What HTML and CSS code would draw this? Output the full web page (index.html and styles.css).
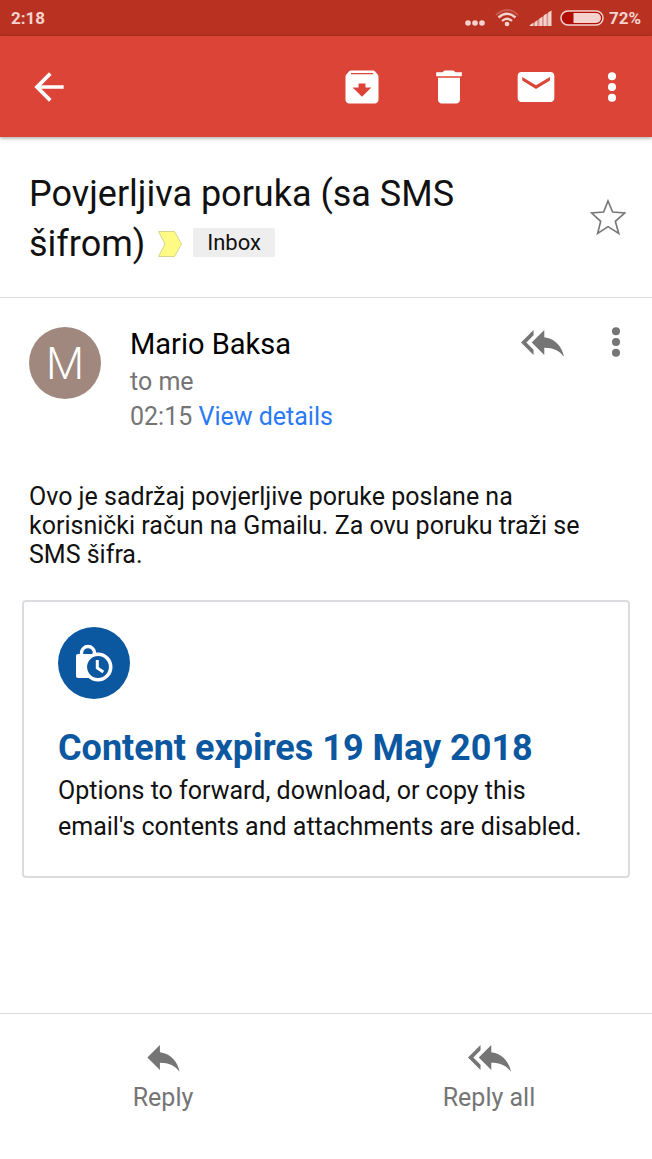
FILE: index.html
```html
<!DOCTYPE html>
<html lang="hr">
<head>
  <meta charset="UTF-8">
  <meta name="viewport" content="width=device-width, initial-scale=1">
  <title>Povjerljiva poruka</title>
  <link rel="stylesheet" href="styles.css">
</head>
<body>

  <div class="status-bar">
    <span class="clock">2:18</span>
    <div class="status-icons">
      <svg class="status-dots" width="20" height="18" viewBox="0 0 20 18"><circle cx="3" cy="14" r="2.8"/><circle cx="10" cy="14" r="2.8"/><circle cx="17" cy="14" r="2.8"/></svg>
      <svg class="status-wifi" width="24" height="18" viewBox="0 0 24 18">
        <g fill="none" stroke="#f4d3cf">
          <path d="M1 6Q12-4 23 6" stroke-width="2" opacity=".25"/>
          <path d="M3.5 8.5Q12 1 20.5 8.5" stroke-width="2.4"/>
          <path d="M7 12Q12 7.5 17 12" stroke-width="2.2"/>
        </g>
        <circle cx="12" cy="15" r="2.3"/>
      </svg>
      <svg class="status-signal" width="23" height="18" viewBox="0 0 23 18"><path opacity=".6" d="M0 17L22 2v15z"/><path d="M1 17v-1l3-2v3zM6 17v-4l2-1.5v5.500zM10.500 17v-7.500l2.500-1.500v9zM14.700 17V6.500L17.500 4.500v12.500zM19.200 17V3.500L22.500 1.500V17z"/></svg>
      <svg class="status-battery" width="44" height="18" viewBox="0 0 44 18">
        <rect x="1" y="2" width="42" height="14" rx="7" fill="#b00d05" stroke="#f4d3cf" stroke-width="1.5"/>
        <path d="M13.500 4H36a5 5 0 0 1 0 10H13.500z"/>
      </svg>
      <span>72%</span>
    </div>
  </div>

  <header class="app-bar">
    <button class="icon-button back" aria-label="Back">
      <svg class="icon" viewBox="0 0 24 24"><path d="M20 11H7.830l5.590-5.590L12 4l-8 8 8 8 1.410-1.410L7.830 13H20v-2z"/></svg>
    </button>
    <button class="icon-button" aria-label="Archive">
      <svg class="icon" viewBox="0 0 24 24"><path fill-rule="evenodd" d="M20.540 5.230l-1.390-1.680C18.880 3.210 18.470 3 18 3H6c-.47 0-.88.210-1.160.550L3.460 5.230C3.170 5.570 3 6.020 3 6.500V19c0 1.100.9 2 2 2h14c1.100 0 2-.9 2-2V6.500c0-.48-.17-.93-.46-1.270zM12 17.300L6.900 12.300H10.100v-2.200h3.800v2.200h3.200zM5.800 5l.3-.7h11.800l.3.700z"/></svg>
    </button>
    <button class="icon-button" aria-label="Delete">
      <svg class="icon" viewBox="0 0 24 24"><path d="M6 19c0 1.100.9 2 2 2h8c1.100 0 2-.9 2-2V7H6v12zM19 4h-3.500l-1-1h-5l-1 1H5v2.200h14V4z"/></svg>
    </button>
    <button class="icon-button" aria-label="Mark as unread">
      <svg class="icon" viewBox="0 0 24 24"><path fill-rule="evenodd" d="M20 3.800H4c-1.100 0-2 .9-2 2V18.200c0 1.100.9 2 2 2h16c1.100 0 2-.9 2-2V5.800c0-1.100-.9-2-2-2zM4.500 6.600l7.500 4.500 7.600-4.500V8.400L12 13.100 4.500 8.400z"/></svg>
    </button>
    <button class="icon-button more" aria-label="More options">
      <svg class="icon" viewBox="0 0 24 24"><circle cx="12" cy="6.100" r="2.200"/><circle cx="12" cy="12" r="2.200"/><circle cx="12" cy="17.900" r="2.200"/></svg>
    </button>
  </header>

  <main>
    <section class="subject">
      <div class="subject-text">
        <h1>Povjerljiva poruka (sa SMS šifrom)</h1>
        <svg class="marker" width="24" height="26" viewBox="0 0 24 26"><path d="M.5.500h16L23.500 13l-7 12.500H.5L7 13z"/></svg>
        <span class="label">Inbox</span>
      </div>
      <button class="star" aria-label="Star">
        <svg width="36" height="38" viewBox="271 55 108 114"><path d="M325 64L339 97 375 100 347 125 357 161 325 141 294 161 303 125 276 100 312 97z"/></svg>
      </button>
    </section>

    <article>
      <div class="message-header">
        <div class="avatar">M</div>
        <div class="sender">
          <div class="sender-name">Mario Baksa</div>
          <div class="sender-meta">to me</div>
          <div class="sender-meta">02:15 <a href="#details">View details</a></div>
        </div>
        <button class="icon-button" aria-label="Reply all">
          <svg class="reply-icon" viewBox="0 0 24 24"><path d="M7 8V5l-7 7 7 7v-3l-4-4 4-4zm6 1V5l-7 7 7 7v-4.100c5 0 8.500 1.600 11 5.100-1-5-4-10-11-11z"/></svg>
        </button>
        <button class="icon-button" aria-label="Message options">
          <svg class="icon" viewBox="0 0 24 24"><circle cx="12" cy="6.100" r="2.200"/><circle cx="12" cy="12" r="2.200"/><circle cx="12" cy="17.900" r="2.200"/></svg>
        </button>
      </div>

      <p class="message-text">Ovo je sadržaj povjerljive poruke poslane na korisnički račun na Gmailu. Za ovu poruku traži se SMS šifra.</p>

      <div class="expire-card">
        <svg class="expire-icon" width="72" height="72" viewBox="0 0 72 72">
          <circle cx="36" cy="36" r="36" fill="#0b57a0"/>
          <path d="M23.500 30v-4a6.500 6.500 0 0 1 13 0v4" fill="none" stroke="#fff" stroke-width="3.400"/>
          <path d="M20 27h20v24H20a2 2 0 0 1-2-2V29a2 2 0 0 1 2-2z" fill="#fff"/>
          <circle cx="40" cy="40" r="12.700" fill="#0b57a0" stroke="#fff" stroke-width="3.600"/>
          <path d="M39.300 33v8l6 4" fill="none" stroke="#fff" stroke-width="3"/>
        </svg>
        <h2>Content expires 19 May 2018</h2>
        <p>Options to forward, download, or copy this email's contents and attachments are disabled.</p>
      </div>
    </article>
  </main>

  <footer class="reply-bar">
    <button class="reply-button">
      <svg class="reply-icon" viewBox="0 0 24 24"><path d="M10 9V5l-7 7 7 7v-4.100c5 0 8.500 1.600 11 5.100-1-5-4-10-11-11z"/></svg>
      <span>Reply</span>
    </button>
    <button class="reply-button">
      <svg class="reply-icon" viewBox="0 0 24 24"><path d="M7 8V5l-7 7 7 7v-3l-4-4 4-4zm6 1V5l-7 7 7 7v-4.100c5 0 8.500 1.600 11 5.100-1-5-4-10-11-11z"/></svg>
      <span>Reply all</span>
    </button>
  </footer>

</body>
</html>
```
FILE: styles.css
```css
* {
  box-sizing: border-box;
}

body {
  margin: 0;
  min-height: 100vh;
  display: flex;
  flex-direction: column;
  font-family: Roboto, sans-serif;
  background: #fff;
  color: #111;
}

h1, h2, p {
  margin: 0;
}

button {
  padding: 0;
  border: none;
  background: none;
  font-family: inherit;
  color: inherit;
  cursor: pointer;
}

svg {
  display: block;
  fill: currentColor;
}

.status-bar {
  display: flex;
  align-items: center;
  justify-content: space-between;
  height: 36px;
  padding: 0 11px;
  background: #b93221;
  color: #f4d3cf;
  font-size: 17px;
  font-weight: 700;
}

.status-icons {
  display: flex;
  align-items: center;
}

.status-wifi,
.status-signal {
  margin-left: 10px;
}

.status-battery {
  margin: 0 5px 0 8px;
}

.app-bar {
  display: flex;
  align-items: center;
  height: 101px;
  padding: 0 7px 0 27px;
  background: #db4437;
  color: #fff;
  box-shadow: 0 1px 4px rgba(0,0,0,0.4);
}

.icon-button {
  display: flex;
  align-items: center;
  justify-content: center;
  flex: none;
  width: 87px;
  height: 44px;
}

.icon {
  width: 44px;
  height: 44px;
}

.back {
  width: 44px;
  margin-right: auto;
}

.more {
  width: 66px;
}

.subject {
  display: flex;
  align-items: center;
  padding: 32px 0 28px 29px;
  border-bottom: 1px solid #dcdcdc;
}

.subject-text {
  flex: 1;
  font-size: 36px;
  line-height: 50px;
}

.subject h1 {
  display: inline;
  font-size: inherit;
  font-weight: 400;
}

.marker {
  display: inline-block;
  vertical-align: -1px;
  margin: 0 2px 0 4px;
  fill: #fffa84;
  stroke: #d8d58c;
}

.label {
  display: inline-block;
  vertical-align: 6px;
  padding: 0 14px;
  border-radius: 2px;
  background: #eee;
  font-size: 22px;
  line-height: 29px;
}

.star {
  display: flex;
  justify-content: center;
  width: 88px;
  padding-bottom: 4px;
}

.star svg {
  fill: none;
  stroke: #777;
  stroke-width: 5;
}

.message-header {
  display: flex;
  padding: 29px 0 0 29px;
}

.avatar {
  width: 72px;
  height: 72px;
  border-radius: 50%;
  background: #a1887f;
  color: #fff;
  font-size: 44px;
  font-weight: 300;
  line-height: 74px;
  text-align: center;
}

.sender {
  flex: 1;
  padding-left: 29px;
}

.sender-name {
  margin-bottom: 3px;
  font-size: 29px;
  line-height: 34px;
  color: #000;
}

.sender-meta {
  font-size: 25px;
  line-height: 35px;
  color: #757575;
}

.sender-meta a {
  color: #2a7af5;
  text-decoration: none;
}

.message-header .icon-button {
  width: 73px;
  margin-top: -7px;
  color: #757575;
}

.message-text {
  padding: 48px 29px 0;
  font-size: 25px;
  line-height: 29px;
}

.expire-card {
  margin: 31px 22px 0;
  padding: 25px 34px 31px;
  border: 2px solid #dadce0;
  border-radius: 4px;
}

.expire-card h2 {
  margin: 27px 0 3px;
  color: #0b57a0;
  font-size: 36px;
  font-weight: 700;
  line-height: 44px;
}

.expire-card p {
  font-size: 25px;
  line-height: 36px;
}

.reply-bar {
  display: flex;
  height: 146px;
  margin-top: auto;
  border-top: 1px solid #dcdcdc;
}

.reply-button {
  display: flex;
  flex: 1;
  flex-direction: column;
  align-items: center;
  padding-top: 22px;
  color: #757575;
  font-size: 25px;
  line-height: 38px;
}

.reply-icon {
  width: 43px;
  height: 43px;
}
```
